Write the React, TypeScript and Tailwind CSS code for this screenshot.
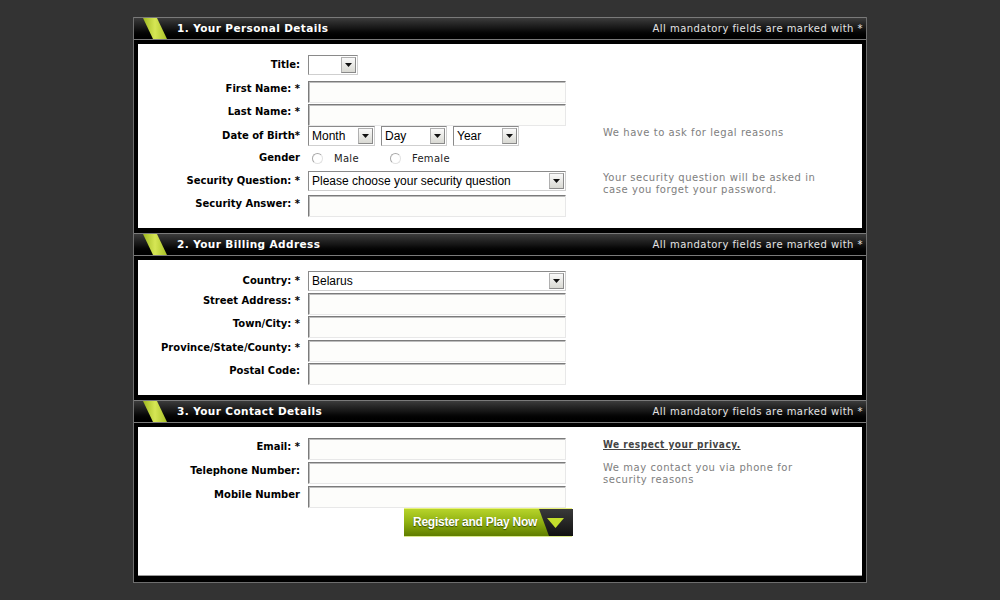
import React from 'react';

const labelFont = "font-['DejaVu_Sans',Verdana,sans-serif]";

function Header({ title }: { title: string }) {
  return (
    <div className="relative flex h-[23px] items-center border-y border-[#7a7a7a] bg-gradient-to-b from-[#3c3c3c] via-[#151515] to-black">
      <svg className="absolute left-[8px] top-0" width="26" height="21" viewBox="0 0 26 21">
        <defs>
          <linearGradient id="slash" x1="0" y1="0" x2="1" y2="0">
            <stop offset="0" stopColor="#9fb820" />
            <stop offset="0.5" stopColor="#d6e655" />
            <stop offset="1" stopColor="#a8c126" />
          </linearGradient>
        </defs>
        <polygon points="1,0 15,0 25,21 11,21" fill="url(#slash)" />
      </svg>
      <span className="ml-[43px] text-[10.5px] font-bold tracking-[0.4px] text-white">{title}</span>
      <span className="ml-auto mr-[3px] text-[10px] tracking-[0.45px] text-[#e4e4e4]">
        All mandatory fields are marked with *
      </span>
    </div>
  );
}

function Arrow() {
  return (
    <div className="my-[1px] mr-[1px] flex w-[15px] items-center justify-center border border-[#b0b0b0] border-r-[#8a8a8a] border-b-[#8a8a8a] bg-gradient-to-b from-[#fafafa] to-[#d9d9d3]">
      <svg width="7" height="4" viewBox="0 0 7 4">
        <polygon points="0,0 7,0 3.5,4" fill="#111" />
      </svg>
    </div>
  );
}

function Select({ w, text }: { w: string; text?: string }) {
  return (
    <div
      className={`${w} flex h-[20px] border border-[#8a8a8a] border-r-[#cfcfcf] border-b-[#cfcfcf] bg-white font-['Liberation_Sans',Arial,sans-serif] text-[12px] text-black`}
    >
      <span className="flex-1 truncate pl-[3px] leading-[18px]">{text}</span>
      <Arrow />
    </div>
  );
}

function Input() {
  return (
    <div className="h-[22px] w-[258px] border border-t-[#7b7b7b] border-l-[#7b7b7b] border-r-[#e8e8e8] border-b-[#e8e8e8] bg-[#fdfdfb] shadow-[inset_1px_1px_0_#bdbdbd]" />
  );
}

function Row({
  h,
  pt,
  label,
  children,
  help,
}: {
  h: string;
  pt: string;
  label?: string;
  children?: React.ReactNode;
  help?: React.ReactNode;
}) {
  return (
    <div className={`flex ${h}`}>
      <div className={`w-[162px] shrink-0 whitespace-nowrap text-right text-[10px] font-bold leading-[16px] text-black ${pt} ${labelFont}`}>
        {label}
      </div>
      <div className="ml-[8px] w-[258px] shrink-0">{children}</div>
      <div className="ml-[37px] w-[230px] pt-[1px] text-[10px] leading-[12px] tracking-[0.55px] text-[#7e7e7e]">{help}</div>
    </div>
  );
}

function Radio({ label, gap }: { label: string; gap: string }) {
  return (
    <div className={`flex items-center ${gap}`}>
      <div className="h-[11px] w-[11px] rounded-full border border-[#a8a8a8] border-r-[#e2e2e2] border-b-[#e2e2e2] bg-white" />
      <span className="ml-[11px] text-[10px] tracking-[0.3px] text-[#222]">{label}</span>
    </div>
  );
}

function RegisterButton() {
  return (
    <div className="flex h-[28px] w-[168px] border-t border-[#e8f27a] bg-gradient-to-b from-[#b7d42a] via-[#8fb010] to-[#5f7d00] shadow-[0_1px_0_#d9e98a]">
      <span className="flex-1 whitespace-nowrap pl-[9px] font-['Liberation_Sans',Arial,sans-serif] text-[12px] font-bold leading-[26px] tracking-[-0.25px] text-white [text-shadow:0_1px_1px_#3b4d00]">
        Register and Play Now
      </span>
      <svg className="shrink-0" width="36" height="27" viewBox="0 0 36 27">
        <defs>
          <linearGradient id="tail" x1="0" y1="0" x2="0" y2="1">
            <stop offset="0" stopColor="#3a3a3a" />
            <stop offset="1" stopColor="#111" />
          </linearGradient>
        </defs>
        <polygon points="2,0 36,0 36,27 12,27" fill="url(#tail)" />
        <polygon points="10,9 27,9 18.5,19" fill="#c4de2c" />
      </svg>
    </div>
  );
}

export default function App() {
  return (
    <div className="min-h-[600px] bg-[#333333] pt-[17px] font-['DejaVu_Sans',Verdana,sans-serif]">
      <div className="mx-auto w-[734px] border-x border-b border-[#6e6e6e] bg-black pb-[6px]">
        {/* 1. Personal details */}
        <Header title="1. Your Personal Details" />
        <div className="mx-[4px] mt-[4px] h-[184px] bg-white pt-[11px]">
          <Row h="h-[26px]" pt="pt-[2px]" label="Title:">
            <Select w="w-[50px]" />
          </Row>
          <Row h="h-[23px]" pt="pt-[0px]" label="First Name: *">
            <Input />
          </Row>
          <Row h="h-[22px]" pt="pt-[0px]" label="Last Name: *">
            <Input />
          </Row>
          <Row h="h-[24px]" pt="pt-[2px]" label="Date of Birth*" help={<div>We have to ask for legal reasons</div>}>
            <div className="flex gap-[6px]">
              <Select w="w-[67px]" text="Month" />
              <Select w="w-[66px]" text="Day" />
              <Select w="w-[66px]" text="Year" />
            </div>
          </Row>
          <Row h="h-[21px]" pt="pt-[0px]" label="Gender">
            <div className="flex pl-[4px] pt-[1px]">
              <Radio label="Male" gap="" />
              <Radio label="Female" gap="ml-[31px]" />
            </div>
          </Row>
          <Row
            h="h-[24px]"
            pt="pt-[2px]"
            label="Security Question: *"
            help={
              <div>
                Your security question will be asked in
                <br />
                case you forget your password.
              </div>
            }
          >
            <Select w="w-[258px]" text="Please choose your security question" />
          </Row>
          <Row h="h-[22px]" pt="pt-[1px]" label="Security Answer: *">
            <Input />
          </Row>
        </div>

        {/* 2. Billing address */}
        <div className="mt-[5px]">
          <Header title="2. Your Billing Address" />
        </div>
        <div className="mx-[4px] mt-[4px] h-[135px] bg-white pt-[11px]">
          <Row h="h-[22px]" pt="pt-[2px]" label="Country: *">
            <Select w="w-[258px]" text="Belarus" />
          </Row>
          <Row h="h-[23px]" pt="pt-[0px]" label="Street Address: *">
            <Input />
          </Row>
          <Row h="h-[24px]" pt="pt-[0px]" label="Town/City: *">
            <Input />
          </Row>
          <Row h="h-[23px]" pt="pt-[0px]" label="Province/State/County: *">
            <Input />
          </Row>
          <Row h="h-[22px]" pt="pt-[0px]" label="Postal Code:">
            <Input />
          </Row>
        </div>

        {/* 3. Contact details */}
        <div className="mt-[5px]">
          <Header title="3. Your Contact Details" />
        </div>
        <div className="mx-[4px] mt-[4px] h-[149px] border-b border-[#9a9a9a] bg-white pt-[11px]">
          <Row
            h="h-[24px]"
            pt="pt-[1px]"
            label="Email: *"
            help={
              <div className="font-['DejaVu_Sans_Condensed',sans-serif] font-bold tracking-[0.5px] text-[#444] underline decoration-[#444]">
                We respect your privacy.
              </div>
            }
          >
            <Input />
          </Row>
          <Row
            h="h-[24px]"
            pt="pt-[1px]"
            label="Telephone Number:"
            help={
              <div className="-mt-[1px]">
                We may contact you via phone for
                <br />
                security reasons
              </div>
            }
          >
            <Input />
          </Row>
          <Row h="h-[22px]" pt="pt-[1px]" label="Mobile Number">
            <Input />
          </Row>
          <Row h="h-[28px]" pt="pt-[0px]">
            <div className="ml-[96px] w-[168px]">
              <RegisterButton />
            </div>
          </Row>
        </div>
      </div>
    </div>
  );
}
